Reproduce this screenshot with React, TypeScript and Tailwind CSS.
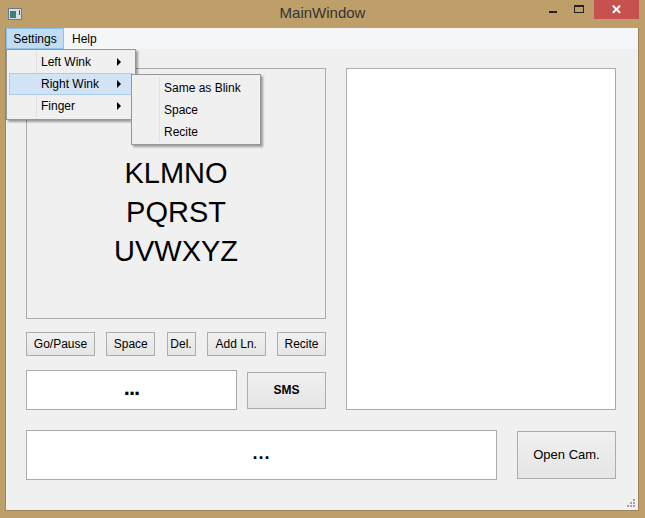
import React from 'react';

const font = { fontFamily: '"Liberation Sans", Arial, sans-serif' };

const Btn: React.FC<{ label: string; className?: string; bold?: boolean }> = ({ label, className = '', bold }) => (
  <div
    className={`flex items-center justify-center border border-[#acacac] bg-gradient-to-b from-[#f0f0f0] to-[#e5e5e5] text-black ${bold ? 'font-bold' : ''} ${className}`}
  >
    {label}
  </div>
);

const Arrow = () => (
  <span className="block w-0 h-0 border-y-[4px] border-y-transparent border-l-[4px] border-l-black" />
);

const App: React.FC = () => {
  return (
    <div className="w-[645px] h-[518px] bg-[#bf9f69] relative overflow-hidden" style={font}>
      {/* title bar */}
      <div className="h-[28px] flex items-center relative">
        <div className="w-[105px] self-stretch flex items-center">
          <div className="ml-[8px] w-[14px] h-[12px] border border-[#6b7b88] bg-[#d9dee3] flex items-end p-[1px]">
            <div className="w-[6px] h-[7px] bg-[#3f7e73]" />
            <div className="ml-[3px] w-[1px] h-[5px] self-start bg-[#2a4a8a]" />
          </div>
        </div>
        <div className="flex-1 text-center text-[15px] text-[#333333] -mt-[1px]">MainWindow</div>
        <div className="w-[105px] flex items-start self-start h-[20px]">
          <div className="w-[26px] h-[20px] flex justify-center">
            <div className="mt-[11px] w-[8px] h-[2px] bg-[#222]" />
          </div>
          <div className="w-[26px] h-[20px] flex justify-center">
            <div className="mt-[5px] w-[10px] h-[8px] border border-[#222] border-t-2" />
          </div>
          <div className="w-[45px] h-[19px] bg-[#c75050] flex items-center justify-center text-white text-[13px] font-bold ml-[2px] mr-[6px]">
            ✕
          </div>
        </div>
      </div>

      {/* client */}
      <div className="absolute left-[5px] top-[28px] w-[634px] h-[483px] border-x border-b border-[#9d8560] bg-[#f0f0f0]">
        {/* menubar */}
        <div className="h-[21px] bg-[#f5f6f7] flex items-stretch text-[12px] text-black">
          <div className="w-[58px] border border-[#8ec1ec] bg-[#c1ddf5] flex items-center justify-center">Settings</div>
          <div className="px-[8px] flex items-center">Help</div>
        </div>

        {/* content */}
        <div className="pl-[20px] pr-[22px] pt-[19px] text-[12px]">
          <div className="flex gap-[20px]">
            <div className="w-[300px] flex flex-col">
              <div className="h-[251px] border border-[#ababab] bg-[#f0f0f0] flex flex-col items-center pt-[85px] text-[29px] leading-[39px] text-black">
                <div>KLMNO</div>
                <div>PQRST</div>
                <div>UVWXYZ</div>
              </div>
              <div className="mt-[13px] h-[24px] flex justify-between">
                <Btn label="Go/Pause" className="w-[69px]" />
                <Btn label="Space" className="w-[49px]" />
                <Btn label="Del." className="w-[29px]" />
                <Btn label="Add Ln." className="w-[59px]" />
                <Btn label="Recite" className="w-[49px]" />
              </div>
              <div className="mt-[14px] flex items-center gap-[10px]">
                <div className="w-[211px] h-[40px] bg-white border border-[#ababab] flex items-center justify-center font-bold text-[22px] tracking-[-1px] pb-[6px] text-black">
                  ...
                </div>
                <Btn label="SMS" bold className="w-[79px] h-[37px] text-[12px]" />
              </div>
            </div>
            <div className="w-[271px] h-[342px] bg-white border border-[#ababab]" />
          </div>

          <div className="mt-[20px] flex items-center gap-[20px]">
            <div className="w-[471px] h-[50px] bg-white border border-[#ababab] flex items-center justify-center font-bold text-[18px] tracking-[1px] pb-[4px] text-black">
              ...
            </div>
            <Btn label="Open Cam." className="w-[99px] h-[48px] text-[13px]" />
          </div>
        </div>

        {/* resize grip */}
        <div className="absolute right-[3px] bottom-[3px] grid grid-cols-3 gap-[1px]">
          <span className="w-[2px] h-[2px]" />
          <span className="w-[2px] h-[2px]" />
          <span className="w-[2px] h-[2px] bg-[#a0a0a0]" />
          <span className="w-[2px] h-[2px]" />
          <span className="w-[2px] h-[2px] bg-[#a0a0a0]" />
          <span className="w-[2px] h-[2px] bg-[#a0a0a0]" />
          <span className="w-[2px] h-[2px] bg-[#a0a0a0]" />
          <span className="w-[2px] h-[2px] bg-[#a0a0a0]" />
          <span className="w-[2px] h-[2px] bg-[#a0a0a0]" />
        </div>
      </div>

      {/* settings dropdown */}
      <div className="absolute left-[6px] top-[49px] w-[130px] h-[71px] bg-[#f0f0f0] border border-[#979797] shadow-[2px_2px_2px_rgba(0,0,0,0.35)] pt-[1px] text-[12px] text-black">
        <div className="absolute left-[29px] top-[2px] bottom-[2px] w-[1px] bg-[#e0e0e0]" />
        <div className="relative h-[22px] mx-[2px] flex items-center pl-[32px] pr-[12px] justify-between">
          <span>Left Wink</span>
          <Arrow />
        </div>
        <div className="relative h-[22px] mx-[2px] flex items-center pl-[31px] pr-[11px] justify-between border border-[#a8ccee] bg-[#d1e3f5]">
          <span>Right Wink</span>
          <Arrow />
        </div>
        <div className="relative h-[22px] mx-[2px] flex items-center pl-[32px] pr-[12px] justify-between">
          <span>Finger</span>
          <Arrow />
        </div>
      </div>

      {/* submenu */}
      <div className="absolute left-[131px] top-[74px] w-[130px] h-[71px] bg-[#f0f0f0] border border-[#979797] shadow-[2px_2px_2px_rgba(0,0,0,0.35)] pt-[2px] text-[12px] text-black">
        <div className="absolute left-[27px] top-[2px] bottom-[2px] w-[1px] bg-[#e0e0e0]" />
        <div className="h-[22px] flex items-center pl-[32px]">Same as Blink</div>
        <div className="h-[22px] flex items-center pl-[32px]">Space</div>
        <div className="h-[22px] flex items-center pl-[32px]">Recite</div>
      </div>
    </div>
  );
};

export default App;
